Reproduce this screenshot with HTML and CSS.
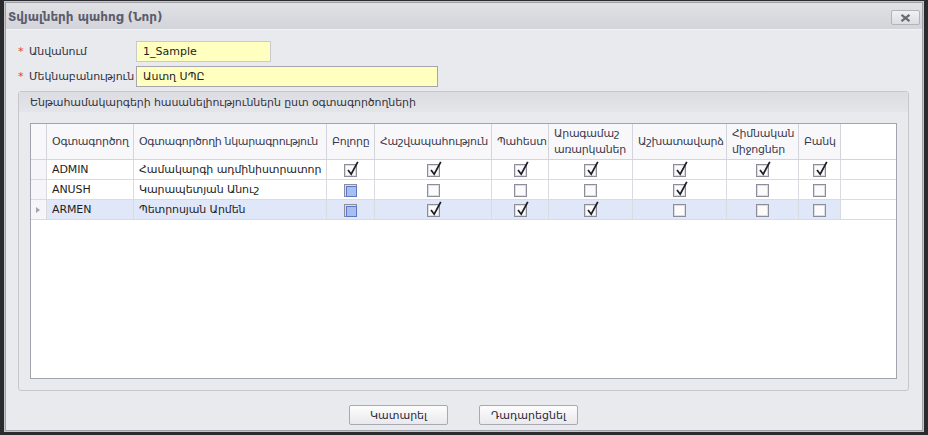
FILE: index.html
```html
<!DOCTYPE html>
<html lang="hy">
<head>
<meta charset="utf-8">
<title>Տվյալների պահոց (Նոր)</title>
<link rel="stylesheet" href="styles.css">
</head>
<body>
<div class="window">
  <div class="frame">
    <div class="titlebar">
      <span class="title">Տվյալների պահոց (Նոր)</span>
      <button class="close-btn" type="button">
        <svg width="11" height="8" viewBox="0 0 11 8"><path d="M1.5 0.8 L9.5 7.2 M9.5 0.8 L1.5 7.2" stroke="#6b6b78" stroke-width="2.2" fill="none"/></svg>
      </button>
    </div>
    <div class="content">
      <div class="form-row">
        <label class="label"><span class="req">*</span>Անվանում</label>
        <div class="input short">1_Sample</div>
      </div>
      <div class="form-row">
        <label class="label"><span class="req">*</span>Մեկնաբանություն</label>
        <div class="input long focused">Աստղ ՍՊԸ</div>
      </div>
      <div class="group">
        <div class="group-head">Ենթահամակարգերի հասանելիություններն ըստ օգտագործողների</div>
        <div class="group-body">
          <div class="grid">
            <div class="hc ind"></div>
            <div class="hc">Օգտագործող</div>
            <div class="hc nw">Օգտագործողի նկարագրություն</div>
            <div class="hc">Բոլորը</div>
            <div class="hc">Հաշվապահություն</div>
            <div class="hc">Պահեստ</div>
            <div class="hc">Արագամաշ առարկաներ</div>
            <div class="hc">Աշխատավարձ</div>
            <div class="hc">Հիմնական միջոցներ</div>
            <div class="hc">Բանկ</div>
            <div class="hc last"></div>

            <div class="c ind"></div>
            <div class="c">ADMIN</div>
            <div class="c">Համակարգի ադմինիստրատոր</div>
            <div class="c ck"><span class="cb on"></span></div>
            <div class="c ck"><span class="cb on"></span></div>
            <div class="c ck"><span class="cb on"></span></div>
            <div class="c ck"><span class="cb on"></span></div>
            <div class="c ck"><span class="cb on"></span></div>
            <div class="c ck"><span class="cb on"></span></div>
            <div class="c ck"><span class="cb on"></span></div>
            <div class="c last"></div>

            <div class="c ind"></div>
            <div class="c">ANUSH</div>
            <div class="c">Կարապետյան Անուշ</div>
            <div class="c ck"><span class="cb mid"></span></div>
            <div class="c ck"><span class="cb"></span></div>
            <div class="c ck"><span class="cb"></span></div>
            <div class="c ck"><span class="cb"></span></div>
            <div class="c ck"><span class="cb on"></span></div>
            <div class="c ck"><span class="cb"></span></div>
            <div class="c ck"><span class="cb"></span></div>
            <div class="c last"></div>

            <div class="c ind cur"><span class="arrow"></span></div>
            <div class="c sel">ARMEN</div>
            <div class="c sel">Պետրոսյան Արմեն</div>
            <div class="c ck sel"><span class="cb mid"></span></div>
            <div class="c ck sel"><span class="cb on"></span></div>
            <div class="c ck sel"><span class="cb on"></span></div>
            <div class="c ck sel"><span class="cb on"></span></div>
            <div class="c ck sel"><span class="cb"></span></div>
            <div class="c ck sel"><span class="cb"></span></div>
            <div class="c ck sel"><span class="cb"></span></div>
            <div class="c last"></div>
          </div>
        </div>
      </div>
      <div class="footer">
        <button class="btn" type="button">Կատարել</button>
        <button class="btn" type="button">Դադարեցնել</button>
      </div>
    </div>
  </div>
</div>
</body>
</html>
```
FILE: styles.css
```css
* { box-sizing: border-box; }
html, body { margin: 0; }
body {
  width: 928px;
  height: 435px;
  padding: 1px 4px 0 4px;
  background: #2b2b2e;
  font-family: "DejaVu Sans", sans-serif;
  font-size: 11px;
  color: #222;
  overflow: hidden;
}
.window {
  height: 431px;
  border: 1px solid #c4c5cb;
  background: #e9eaee;
  display: flex;
}
.frame {
  flex: 1;
  border: 1px solid #9fa0aa;
  display: flex;
  flex-direction: column;
}
.titlebar {
  height: 27px;
  flex: none;
  background: linear-gradient(#e0e1e5, #d3d4d9);
  border-bottom: 1px solid #f3f3f5;
  display: flex;
  align-items: center;
  justify-content: space-between;
  padding: 0 2px 0 2px;
}
.title {
  font-weight: bold;
  font-size: 12px;
  color: #5c5c6c;
  margin-top: 1px;
}
.close-btn {
  width: 29px;
  height: 15px;
  margin-top: 3px;
  border: 1px solid #b2b3bb;
  border-radius: 2px;
  background: linear-gradient(#f1f1f3, #dcdde1);
  padding: 0;
  display: flex;
  align-items: center;
  justify-content: center;
}
.content {
  flex: 1;
  display: flex;
  flex-direction: column;
  padding: 11px 13px 0 12px;
}
.form-row {
  display: flex;
  align-items: center;
  height: 21px;
  margin-bottom: 4px;
}
.label {
  width: 118px;
  flex: none;
  color: #33333f;
  font-size: 11px;
  white-space: nowrap;
  letter-spacing: -0.1px;
}
.req {
  color: #e0403c;
  display: inline-block;
  width: 11px;
}
.input {
  height: 21px;
  background: #ffffbf;
  border: 1px solid #c9cad0;
  padding: 0 6px;
  display: flex;
  align-items: center;
  font-size: 11px;
  color: #1e1e1e;
}
.input.short { width: 135px; }
.input.long { width: 302px; }
.input.focused { border-color: #a4a5ad; }
.group {
  height: 300px;
  flex: none;
  border: 1px solid #c6c7cd;
  border-radius: 3px;
  display: flex;
  flex-direction: column;
}
.group-head {
  height: 20px;
  flex: none;
  background: linear-gradient(#dcdde2, #e4e5e9);
  padding: 0 0 0 11px;
  display: flex;
  align-items: center;
  color: #33333f;
  font-size: 11px;
  letter-spacing: -0.1px;
}
.group-body {
  flex: 1;
  padding: 11px;
  display: flex;
}
.grid {
  flex: 1;
  background: #fff;
  border: 1px solid #a2a3ad;
  display: grid;
  grid-template-columns: 16px 87px 193px 48px 117px 57px 84px 94px 72px 42px 1fr;
  grid-template-rows: 36px 20px 20px 20px;
  align-content: start;
}
.hc {
  background: #f8f8fa;
  border-right: 1px solid #d4d5dc;
  border-bottom: 1px solid #d4d5dc;
  padding: 0 3px 0 5px;
  display: flex;
  align-items: center;
  color: #3a3a4e;
  font-size: 11px;
  line-height: 16px;
  letter-spacing: -0.25px;
  overflow: hidden;
}
.hc.nw { white-space: nowrap; letter-spacing: -0.35px; }
.hc.last, .c.last { border-right: none; }
.hc.last { background: #fff; }
.c {
  border-right: 1px solid #dadbe1;
  border-bottom: 1px solid #dadbe1;
  padding: 0 4px 0 5px;
  display: flex;
  align-items: center;
  color: #1e1e24;
  font-size: 11px;
  white-space: nowrap;
  overflow: hidden;
  letter-spacing: -0.1px;
}
.c.ind { background: #f6f6f8; padding: 0; justify-content: center; }
.c.ck { justify-content: center; padding: 0; }
.c.sel { background: #dfe7f8; }
.arrow {
  width: 0;
  height: 0;
  border-top: 3px solid transparent;
  border-bottom: 3px solid transparent;
  border-left: 4px solid #a4a4ae;
  margin-left: -2px;
}
.cb {
  width: 13px;
  height: 13px;
  border: 1px solid #8c8d99;
  background: #fbfbfc;
  box-shadow: inset 0 0 0 1px #dcdde3;
  position: relative;
  margin-top: 1px;
}
.cb.on::after {
  content: "";
  position: absolute;
  left: 2px;
  top: -4px;
  width: 12px;
  height: 15px;
  background: url("data:image/svg+xml;utf8,<svg xmlns='http://www.w3.org/2000/svg' width='12' height='15' viewBox='0 0 12 15'><path d='M1 9 L4.2 13.2 L10.8 0.8' stroke='%23202028' stroke-width='1.8' fill='none' stroke-linejoin='miter'/></svg>") no-repeat;
}
.cb.mid::after {
  content: "";
  position: absolute;
  left: 1px;
  top: 1px;
  width: 9px;
  height: 9px;
  border: 1px solid #5a78c4;
  background: #a9bdee;
}
.footer {
  display: flex;
  justify-content: center;
  gap: 31px;
  padding-top: 14px;
}
.btn {
  width: 99px;
  height: 20px;
  border: 1px solid #a8a9b3;
  border-radius: 2px;
  background: linear-gradient(#fdfdfd, #e9e9ed);
  font-family: "DejaVu Sans", sans-serif;
  font-size: 11px;
  color: #2a2a3a;
  padding: 0;
}
```
